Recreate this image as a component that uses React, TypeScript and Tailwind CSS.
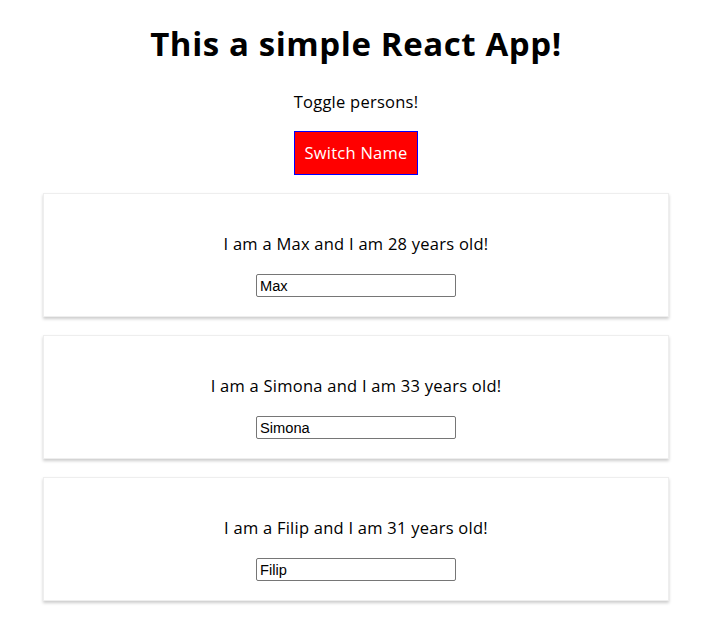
const persons = [
  { name: "Max", age: 28 },
  { name: "Simona", age: 33 },
  { name: "Filip", age: 31 },
];

const Person = ({ name, age }: { name: string; age: number }) => {
  return (
    <div className="w-[626px] border border-[#eeeeee] shadow-[0_2px_3px_#cccccc] pt-[38px] pb-[19px] flex flex-col items-center">
      <p className="text-[16.5px] leading-[24px] tracking-[0.25px] text-black">
        I am a {name} and I am {age} years old!
      </p>
      <input
        type="text"
        defaultValue={name}
        className="mt-[18px] w-[200px] h-[23px] border border-[#767676] rounded-[2px] pl-[3px] pr-[2px] pt-[1px] text-[14.67px] leading-[20px] text-black outline-none"
        style={{ fontFamily: '"Liberation Sans", Arial, sans-serif' }}
      />
    </div>
  );
};

export default function App() {
  return (
    <div
      className="w-[712px] flex flex-col items-center bg-white text-black"
      style={{ fontFamily: '"Open Sans", "Noto Sans", sans-serif' }}
    >
      <h1 className="mt-[24px] text-[33px] leading-[40px] tracking-[0.6px] font-bold">This a simple React App!</h1>
      <p className="mt-[26px] text-[16.5px] leading-[24px] tracking-[0.25px]">Toggle persons!</p>
      <button className="mt-[17px] w-[124px] h-[44px] bg-[#ff0000] border border-[#0000ff] text-white text-[16.5px] tracking-[0.25px]">
        Switch Name
      </button>
      <div className="mt-[18px] flex flex-col gap-[18px] pb-[30px]">
        {persons.map((p) => (
          <Person key={p.name} name={p.name} age={p.age} />
        ))}
      </div>
    </div>
  );
}
